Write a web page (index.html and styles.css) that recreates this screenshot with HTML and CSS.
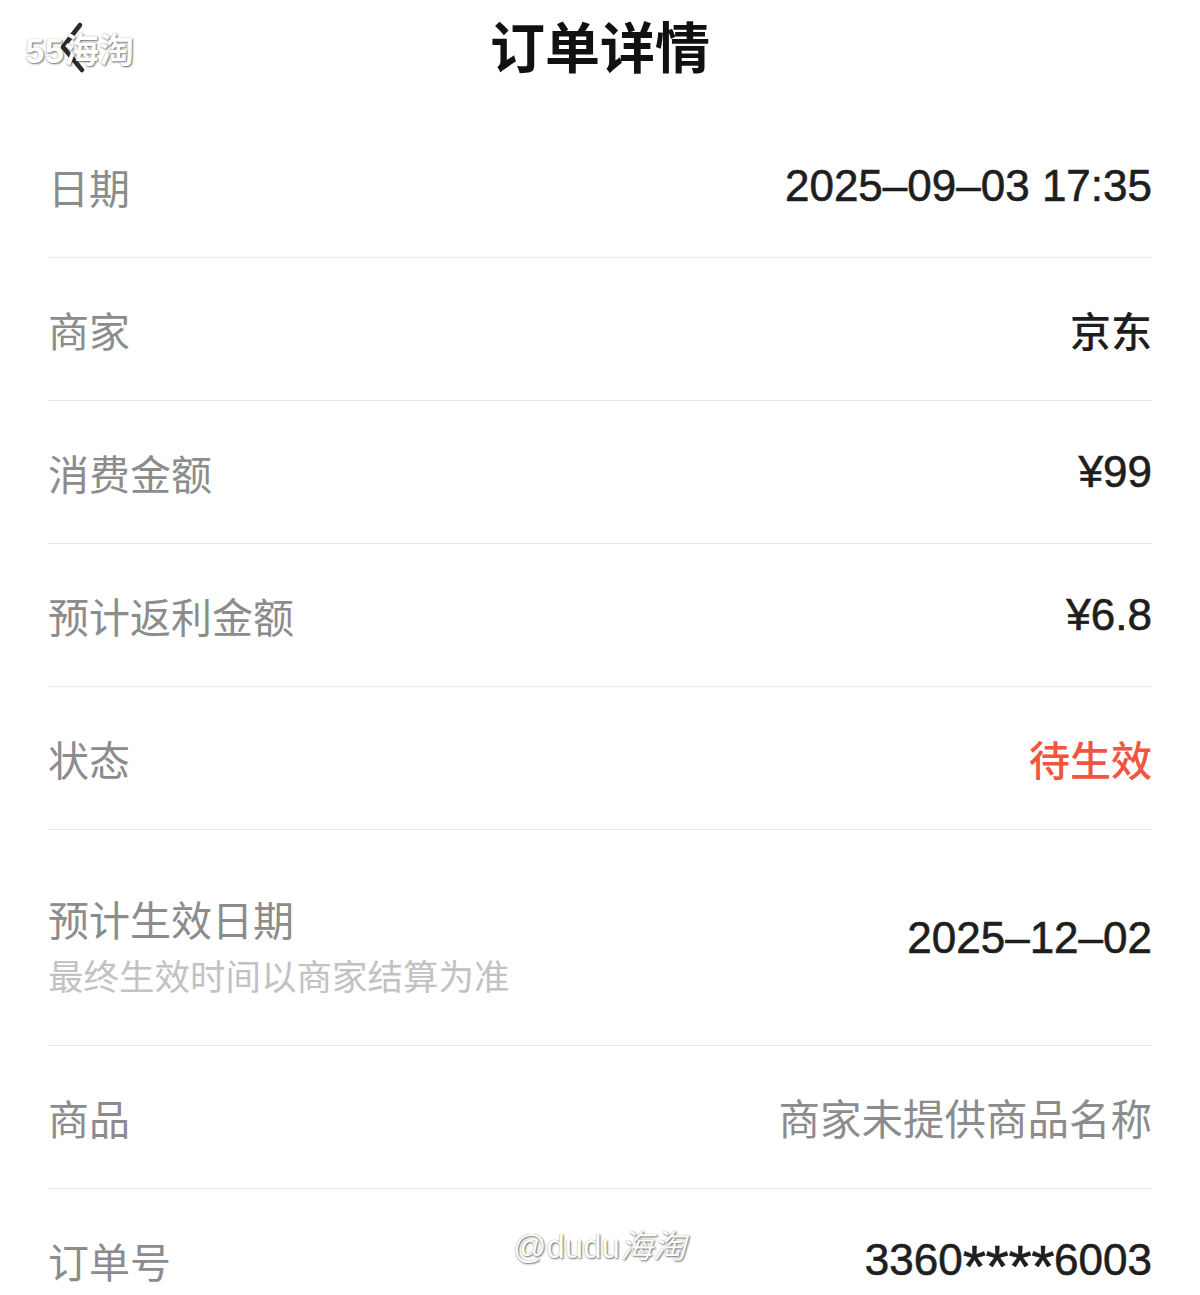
FILE: index.html
```html
<!DOCTYPE html>
<html lang="zh-CN">
<head>
  <meta charset="UTF-8">
  <meta name="viewport" content="width=device-width, initial-scale=1.0">
  <title>订单详情</title>
  <link rel="stylesheet" href="styles.css">
</head>
<body>
  <div class="page">
    <div class="navbar">
      <a class="back" href="#">
        <svg width="40" height="60" viewBox="0 0 40 60">
          <path d="M20 5 L3 27 L22 50" fill="none" stroke="#2b2b2b" stroke-width="4.5" stroke-linecap="round" stroke-linejoin="round"/>
        </svg>
      </a>
      <h1 class="title">订单详情</h1>
    </div>

    <div class="list">
      <div class="row">
        <div class="label">日期</div>
        <div class="value">2025–09–03 17:35</div>
      </div>
      <div class="row">
        <div class="label">商家</div>
        <div class="value cjk">京东</div>
      </div>
      <div class="row">
        <div class="label">消费金额</div>
        <div class="value">¥99</div>
      </div>
      <div class="row">
        <div class="label">预计返利金额</div>
        <div class="value">¥6.8</div>
      </div>
      <div class="row">
        <div class="label">状态</div>
        <div class="value cjk red">待生效</div>
      </div>
      <div class="row tall">
        <div class="label-group">
          <div class="label">预计生效日期</div>
          <div class="sub">最终生效时间以商家结算为准</div>
        </div>
        <div class="value">2025–12–02</div>
      </div>
      <div class="row">
        <div class="label">商品</div>
        <div class="value cjk muted">商家未提供商品名称</div>
      </div>
      <div class="row last">
        <div class="label">订单号</div>
        <div class="value">3360<span class="stars">****</span>6003</div>
      </div>
    </div>

    <div class="mark mark-top">55海淘</div>
    <div class="mark mark-bottom">@dudu<span class="slant">海淘</span></div>
  </div>
</body>
</html>
```

FILE: styles.css
```css
body {
  margin: 0;
  background: #fff;
  font-family: "Liberation Sans", "Noto Sans CJK SC", sans-serif;
  color: #222;
}

.page {
  position: relative;
  width: 1200px;
  min-height: 1295px;
  overflow: hidden;
}

/* Top bar */
.navbar {
  height: 115px;
  display: flex;
  align-items: flex-start;
  justify-content: center;
  position: relative;
}

.back {
  position: absolute;
  left: 60px;
  top: 20px;
  display: block;
}

.title {
  margin: 11px 0 0;
  font-size: 55px;
  line-height: 66px;
  font-weight: 700;
  color: #111;
  font-family: "Noto Sans CJK SC", sans-serif;
}

/* Detail rows */
.list {
  padding: 0 48px;
}

.row {
  display: flex;
  align-items: center;
  justify-content: space-between;
  height: 142px;
  border-bottom: 1px solid #e8e8e8;
}

.row.tall {
  height: 215px;
}

.row.last {
  border-bottom: none;
}

.label {
  font-size: 41px;
  line-height: 56px;
  color: #8c8c8c;
  font-family: "Noto Sans CJK SC", sans-serif;
}

.label-group {
  padding-top: 14px;
}

.sub {
  margin-top: 4px;
  font-size: 35.5px;
  line-height: 50px;
  color: #c2c2c2;
  font-family: "Noto Sans CJK SC", sans-serif;
}

.value {
  font-size: 44px;
  line-height: 56px;
  color: #1e1e1e;
  text-align: right;
  -webkit-text-stroke: 0.6px #1e1e1e;
}

.value.cjk {
  font-size: 41px;
  font-weight: 500;
  -webkit-text-stroke: 0;
  font-family: "Noto Sans CJK SC", sans-serif;
}

.value.red {
  color: #f0553f;
}

.value.muted {
  color: #8c8c8c;
  font-size: 41.5px;
  font-weight: 400;
}

/* larger asterisks, dropped to sit inside the digit height */
.stars {
  display: inline-block;
  font-size: 60px;
  line-height: 46px;
  letter-spacing: -0.5px;
  transform: translateY(12px);
}

/* Image watermarks */
.mark {
  position: absolute;
  color: #fff;
  font-family: "Liberation Sans", "Noto Sans CJK SC", sans-serif;
  text-shadow: 1px 1px 2px rgba(0, 0, 0, 0.55), 0 0 1px rgba(0, 0, 0, 0.4);
  pointer-events: none;
}

.mark-top {
  left: 25px;
  top: 22px;
  font-size: 35px;
  font-weight: 700;
}

.mark-bottom {
  left: 513px;
  top: 1220px;
  font-size: 33px;
}

.slant {
  font-style: italic;
}
```
